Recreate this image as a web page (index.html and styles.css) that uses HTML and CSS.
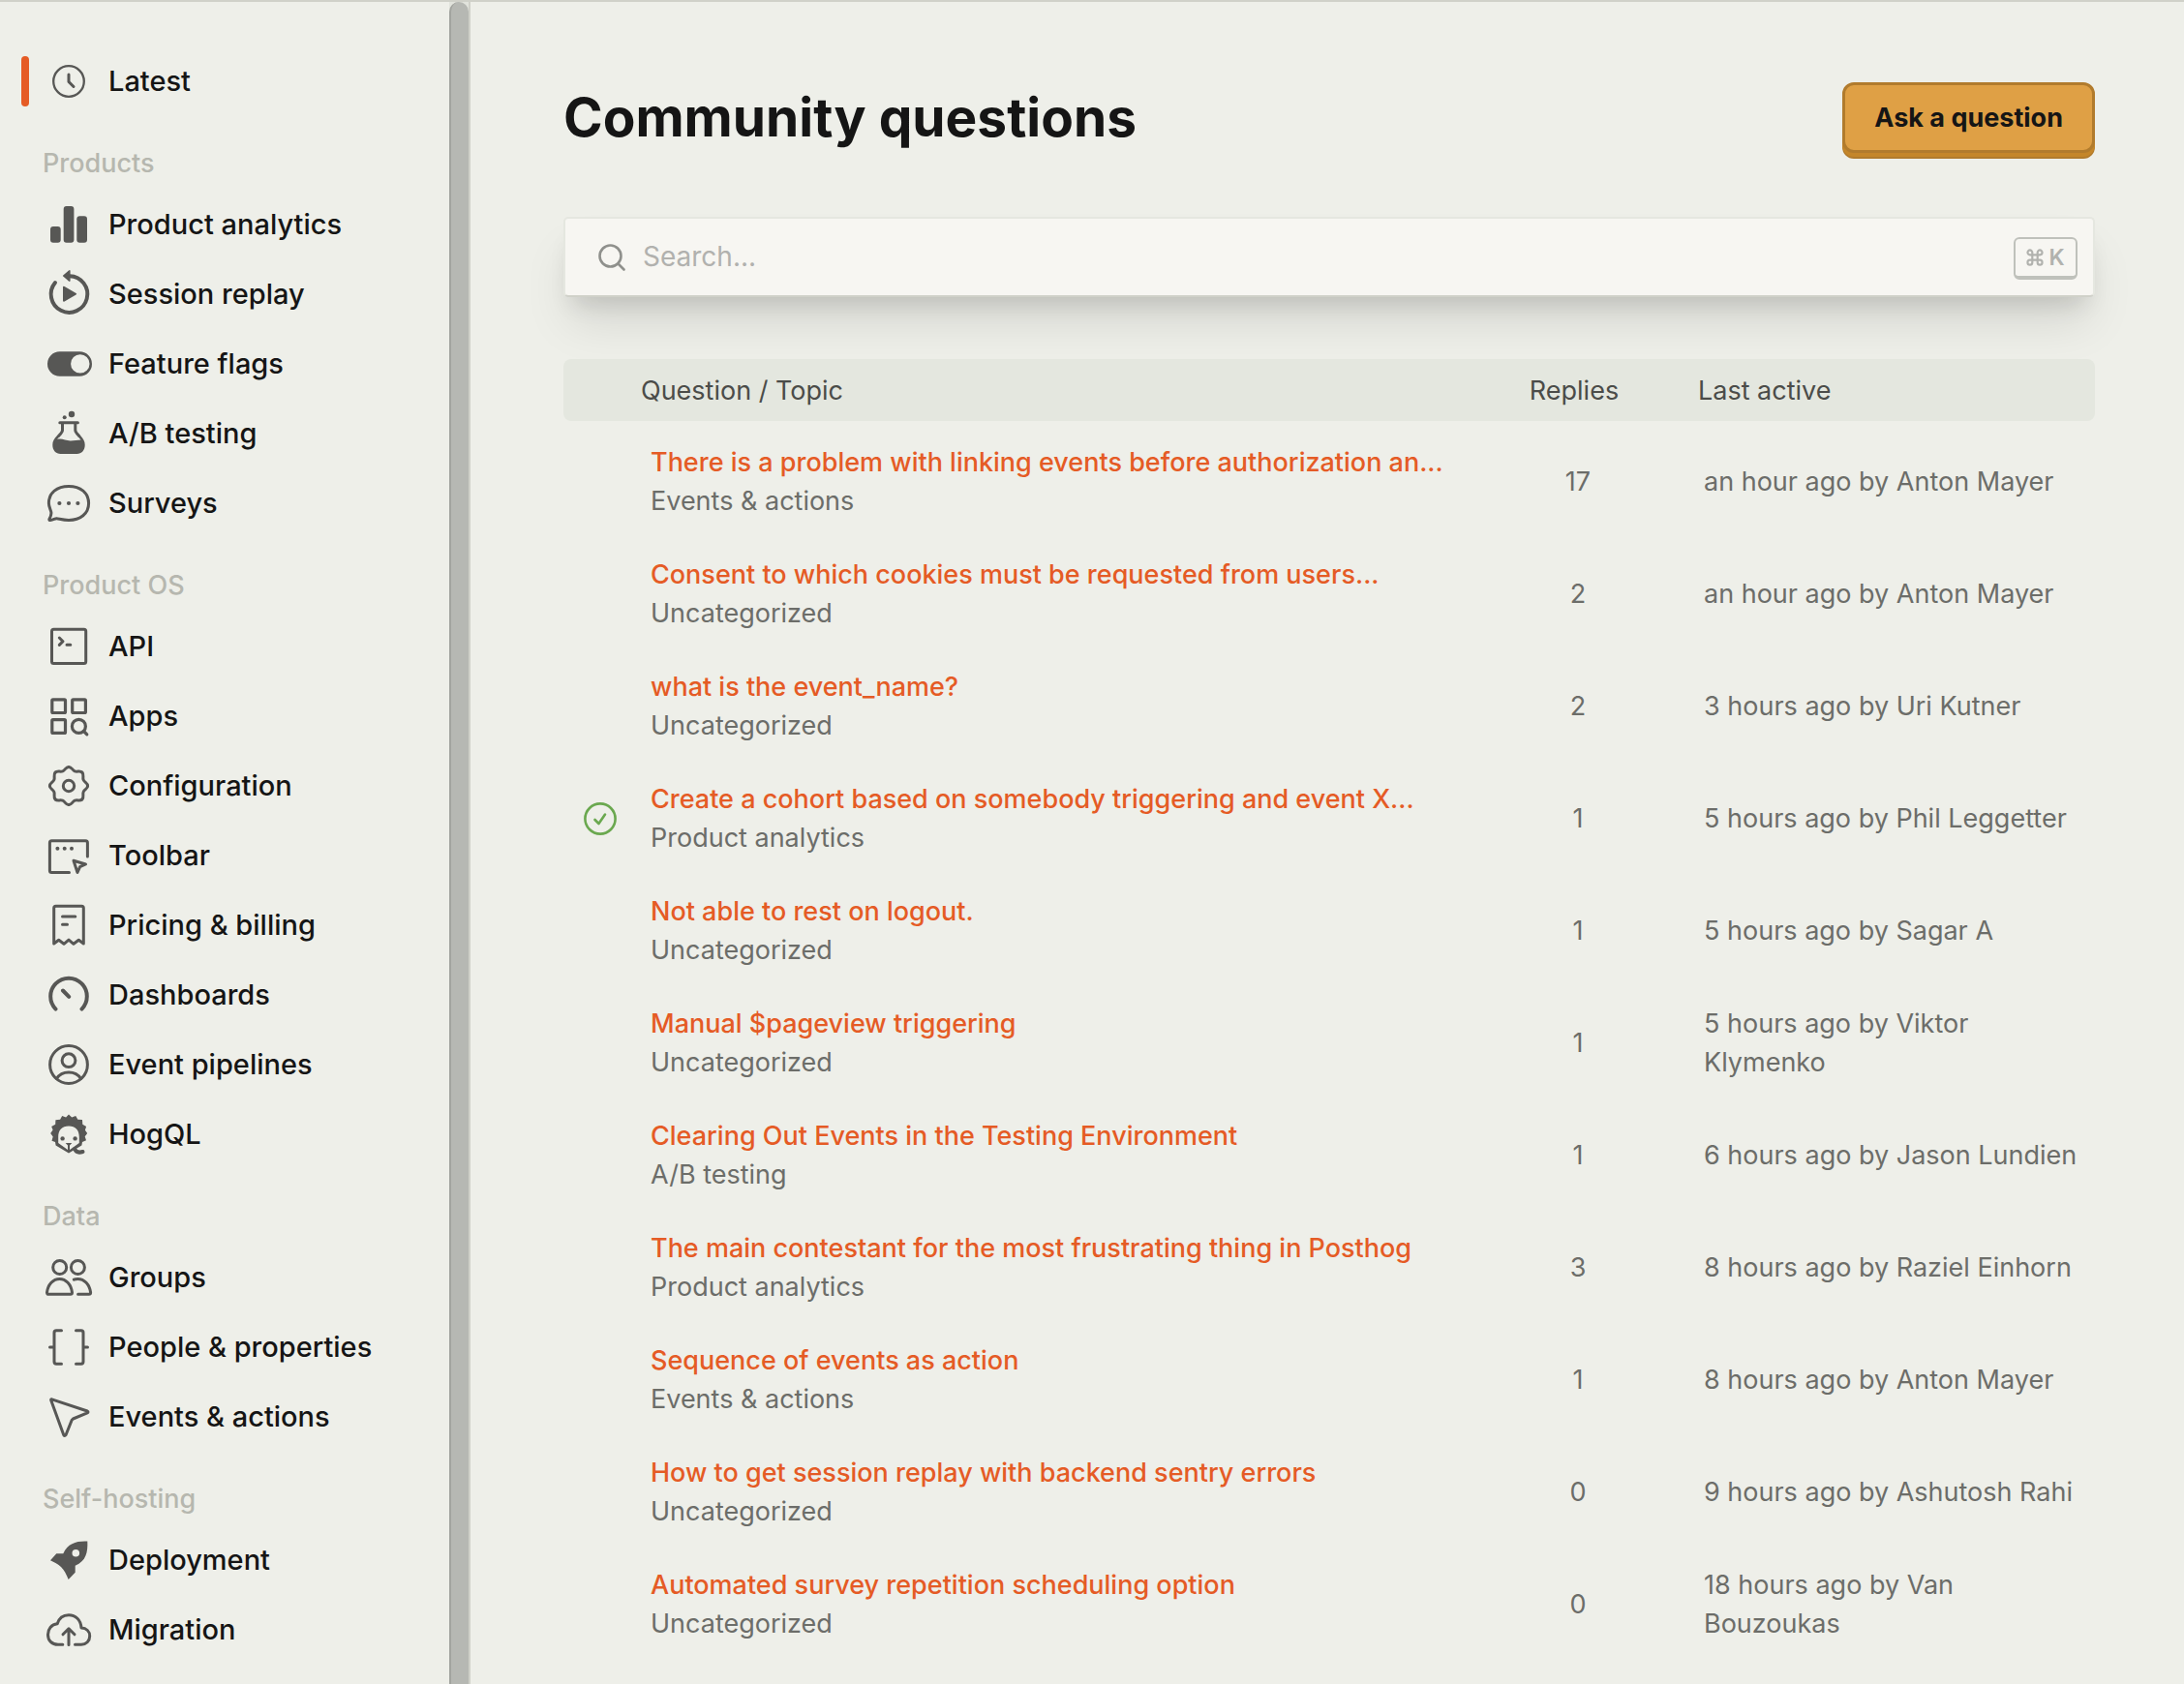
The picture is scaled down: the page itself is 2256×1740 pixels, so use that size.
FILE: index.html
```html
<!DOCTYPE html>
<html lang="en">
<head>
<meta charset="utf-8">
<meta name="viewport" content="width=device-width, initial-scale=1">
<title>Community questions</title>
<link rel="stylesheet" href="styles.css">
</head>
<body>
<div class="layout">
  <nav class="sidebar" aria-label="Topics">
    <div class="menu">
      <ul class="menu-list">
        <li><a class="item active" href="#"><svg class="icon" viewBox="0 0 48 48"><circle cx="24" cy="24" r="15.800" stroke-width="2.300"/><path d="M24 17v7.500l5 5" stroke-width="3"/></svg>Latest</a></li>
      </ul>
      <h2 class="group">Products</h2>
      <ul class="menu-list">
        <li><a class="item" href="#"><svg class="icon solid" viewBox="0 0 48 48"><rect x="5" y="26" width="10.700" height="16.700" rx="3"/><rect x="18.700" y="5" width="10.700" height="37.700" rx="3"/><rect x="32.300" y="15.300" width="10.700" height="27.400" rx="3"/></svg>Product analytics</a></li>
        <li><a class="item" href="#"><svg class="icon" viewBox="0 0 48 48"><path d="M10 12A18.800 18.800 0 1 0 25 5.200" stroke-width="4"/><path class="fill" d="M18.200 5.600q-.8-.6 0-1.200L24-.6q1.600-1 1.600.8v9.600q0 1.800-1.600.8zM18 16.800q0-1.800 1.600-.8l12 7q1.200.7 0 1.400l-12 7q-1.600.9-1.600-.8z"/></svg>Session replay</a></li>
        <li><a class="item" href="#"><svg class="icon solid" viewBox="0 0 48 48"><path fill-rule="evenodd" d="M14.700 11.300h20.600a12.700 12.700 0 0 1 0 25.400H14.700a12.700 12.700 0 0 1 0-25.400zM35.800 14.200a9.700 9.700 0 1 0 0 19.400 9.700 9.700 0 0 0 0-19.400z"/></svg>Feature flags</a></li>
        <li><a class="item" href="#"><svg class="icon" viewBox="0 0 48 48"><path d="M14.800 12.700h18.600M17.500 13v7.500c0 2-1.500 3.500-4 6M30.800 13v7.500c0 2 1.500 3.500 4 6"/><path class="fill" d="M12.300 25.700 15 26.500 12 30c5-1.500 9 1.700 14 1.500 3.600-.1 7-.6 10.500-1L33 26.500l2.700-.8c3.500 3.400 5 6.300 5 10 0 5.300-3.400 9.300-8.300 9.300H15.600c-4.900 0-8.300-4-8.300-9.300 0-3.700 1.500-6.600 5-10z"/><circle class="fill" cx="27" cy="4" r="3.200"/><circle class="fill" cx="19.700" cy="7.300" r="2"/></svg>A/B testing</a></li>
        <li><a class="item" href="#"><svg class="icon" viewBox="0 0 48 48"><path d="M24 6.400C12 6.400 3.400 13 3.400 24c0 3.500 1.800 6.500 2.400 9 .5 2.500-.3 4.500-1.700 7-.6 1.100 0 1.600 1 1.500 3-.2 4.500-1.900 6.500-1.800 2.200.1 6 1.700 12.400 1.700 12 0 20.600-6.600 20.600-17.400S36 6.400 24 6.400z"/><circle class="fill" cx="14.400" cy="24" r="2.100"/><circle class="fill" cx="24" cy="24" r="2.100"/><circle class="fill" cx="33.400" cy="24" r="2.100"/></svg>Surveys</a></li>
      </ul>
      <h2 class="group">Product OS</h2>
      <ul class="menu-list">
        <li><a class="item" href="#"><svg class="icon" viewBox="0 0 48 48"><rect x="6.500" y="6.300" width="35.200" height="35.200" rx="2"/><path d="m14.300 15 3.700 3.700-3.700 3.700M22 22.300h3.800"/></svg>API</a></li>
        <li><a class="item" href="#"><svg class="icon" viewBox="0 0 48 48"><g stroke-width="3.200"><rect x="6.800" y="6.800" width="13.700" height="13.700" rx="1"/><rect x="27.700" y="6.800" width="13.700" height="13.700" rx="1"/><rect x="6.800" y="27.700" width="13.700" height="13.700" rx="1"/><circle cx="34.400" cy="34.400" r="7"/><path d="m39.500 39.500 3.300 3.300"/></g></svg>Apps</a></li>
        <li><a class="item" href="#"><svg class="icon" viewBox="0 0 48 48"><defs><path id="tooth" d="M24 4.400C27.200 4.400 27.600 7.700 30.280 8.850C32.960 9.960 35.600 7.880 37.860 10.140"/></defs><use href="#tooth"/><use href="#tooth" transform="rotate(45 24 24)"/><use href="#tooth" transform="rotate(90 24 24)"/><use href="#tooth" transform="rotate(135 24 24)"/><use href="#tooth" transform="rotate(180 24 24)"/><use href="#tooth" transform="rotate(225 24 24)"/><use href="#tooth" transform="rotate(270 24 24)"/><use href="#tooth" transform="rotate(315 24 24)"/><circle cx="24" cy="24" r="5.700"/></svg>Configuration</a></li>
        <li><a class="item" href="#"><svg class="icon" viewBox="0 0 48 48"><path d="M24.500 41.400H6.400q-2 0-2-2V10.700q0-2 2-2h35q2 0 2 2V25"/><path d="m29 29.300 12.500 3.700-5.900 2.700-2.600 5.800z"/><circle class="fill" cx="12.400" cy="16.700" r="2"/><circle class="fill" cx="19.700" cy="16.700" r="2"/><circle class="fill" cx="27" cy="16.700" r="2"/></svg>Toolbar</a></li>
        <li><a class="item" href="#"><svg class="icon" viewBox="0 0 48 48"><path d="M8.700 43V6.300q0-2 2-2h26.600q2 0 2 2V43l-5-3.700-5.300 4-5-4.200-5 4.200-5.300-4z"/><path d="M17.500 15h13.300M17.500 23.300h5"/></svg>Pricing &amp; billing</a></li>
        <li><a class="item" href="#"><svg class="icon" viewBox="0 0 48 48"><path d="M10.500 38.600a18.800 18.800 0 1 1 27 0M18 19.500l6.200 6.300" stroke-width="4"/></svg>Dashboards</a></li>
        <li><a class="item" href="#"><svg class="icon" viewBox="0 0 48 48"><circle cx="24" cy="24" r="19.400"/><circle cx="24" cy="19.700" r="6.900"/><path d="M11.500 38.500C14 34.500 18.500 32 24 32s10 2.500 12.500 6.500"/></svg>Event pipelines</a></li>
        <li><a class="item" href="#"><svg class="icon" viewBox="0 0 48 48"><path class="fill" fill-rule="evenodd" d="m24 3.500 3.200 3 4-1.500 2.200 3.700 4.600.3.300 4.800 3.800 2.200-1.200 3.800 2.300 3.300-2.500 3.200 1.300 4-4 1.700-.6 3.500L24 43.500 10.600 35.500 10 32l-3.500-1.200 1.200-4.200L5.200 23l2.400-3.400-1.400-3.700 4-2.200.2-4.500 4.700-.4L17.200 5l3.900 1.400zM24 15.600c-7 0-10.800 4.400-10.800 11V33L24 40.800 34.800 33v-6.400c0-6.600-3.800-11-10.800-11z"/><circle class="fill" cx="17.600" cy="28.400" r="2.200"/><circle class="fill" cx="30.600" cy="28.400" r="2.200"/><path class="fill" d="M20.700 33h6.600L24 36.500z"/><path d="M24 34.500v6" stroke-width="2"/><path d="M30 39c1.500 3.500 4.500 4.300 8.500 3" stroke-width="4"/></svg>HogQL</a></li>
      </ul>
      <h2 class="group">Data</h2>
      <ul class="menu-list">
        <li><a class="item" href="#"><svg class="icon" viewBox="0 0 48 48"><circle cx="14.700" cy="13.500" r="7"/><circle cx="33.400" cy="13.500" r="7"/><path d="M1.500 39.500C2.500 31 8 25.400 14.500 25.400s12 5.600 13 14.100q0 1.800-1.700 1.800H3.200q-1.700 0-1.700-1.800zM29.300 26.200c1.200-.6 2.600-.8 4-.8C40 25.400 45.500 31 46.600 39.500q0 1.800-1.700 1.800H33.600"/></svg>Groups</a></li>
        <li><a class="item" href="#"><svg class="icon" viewBox="0 0 48 48"><path d="M16.500 6.700H11.200q-2.200 0-2.200 2.200v30.200q0 2.200 2.200 2.200h5.300M4.500 24H9M31.500 6.700h5.300q2.200 0 2.200 2.200v30.200q0 2.200-2.200 2.200h-5.300M39 24h4.500"/></svg>People &amp; properties</a></li>
        <li><a class="item" href="#"><svg class="icon" viewBox="0 0 48 48"><path d="M6.500 5.800 43.200 18q1.600.9 0 1.900L28.500 26l-1.300 1.300L21 42.700q-1.200 1.600-2.200 0L5.700 6.800q-.3-1.200.8-1z"/></svg>Events &amp; actions</a></li>
      </ul>
      <h2 class="group">Self-hosting</h2>
      <ul class="menu-list">
        <li><a class="item" href="#"><svg class="icon solid" viewBox="0 0 48 48"><path fill-rule="evenodd" d="M43.300 4.600c.5 11.500-1.300 20.400-12.600 25.100v7l-7 7.300C21.500 38.500 19.500 34.500 16 31c-3-2.700-7-4.800-11-6.700l6.300-7h7C23.300 6.500 32 4.100 43.300 4.600zM31.300 13a3.800 3.800 0 1 0 0 7.600 3.800 3.800 0 0 0 0-7.600z"/></svg>Deployment</a></li>
        <li><a class="item" href="#"><svg class="icon" viewBox="0 0 48 48"><path d="M17.800 39.300H13C6.500 39.300 2.500 35 2.500 29c0-5.700 3.600-10.500 9.700-11.200C14 11.800 18.500 8.700 24 8.700c7 0 12.500 5 13 13.300 5.200.2 8.700 3.700 8.700 8.500 0 5-3.700 8.800-8.700 8.800h-6.500"/><path d="M24 39.500V23.500M18 28.800l6-6 6 6"/></svg>Migration</a></li>
      </ul>
    </div>
    <div class="scrollbar" aria-hidden="true"><div class="thumb"></div></div>
  </nav>

  <main class="content">
    <header class="page-head">
      <h1 class="title">Community questions</h1>
      <button class="ask" type="button">Ask a question</button>
    </header>

    <form class="search" role="search">
      <label class="search-label" for="q" aria-label="Search"><svg class="search-icon" viewBox="0 0 28 28"><circle cx="12.500" cy="12.500" r="11"/><path d="m20.500 20.500 6 6"/></svg></label>
      <input class="search-input" id="q" type="search" placeholder="Search...">
      <kbd class="shortcut"><svg class="cmd" viewBox="0 0 20 20"><path d="M7 7h6v6H7zM7 7H4.300A2.700 2.700 0 1 1 7 4.300zM13 7V4.300A2.700 2.700 0 1 1 15.700 7zM13 13h2.700a2.700 2.700 0 1 1-2.700 2.700zM7 13v2.700A2.700 2.700 0 1 1 4.300 13z"/></svg>K</kbd>
    </form>

    <table class="questions">
      <colgroup><col class="col-status"><col><col class="col-replies"><col class="col-active"></colgroup>
      <thead>
        <tr><th></th><th>Question / Topic</th><th class="num">Replies</th><th class="when">Last active</th></tr>
      </thead>
      <tbody>
        <tr><td></td><td><a class="question" href="#">There is a problem with linking events before authorization an...</a><span class="topic">Events &amp; actions</span></td><td class="num">17</td><td class="when">an hour ago by Anton Mayer</td></tr>
        <tr><td></td><td><a class="question" href="#">Consent to which cookies must be requested from users...</a><span class="topic">Uncategorized</span></td><td class="num">2</td><td class="when">an hour ago by Anton Mayer</td></tr>
        <tr><td></td><td><a class="question" href="#">what is the event_name?</a><span class="topic">Uncategorized</span></td><td class="num">2</td><td class="when">3 hours ago by Uri Kutner</td></tr>
        <tr><td class="status"><svg class="check" viewBox="0 0 36 36" role="img" aria-label="Solved"><circle cx="18" cy="18" r="15.600"/><path d="m12.500 19 4 4 6.500-9.500"/></svg></td><td><a class="question" href="#">Create a cohort based on somebody triggering and event X...</a><span class="topic">Product analytics</span></td><td class="num">1</td><td class="when">5 hours ago by Phil Leggetter</td></tr>
        <tr><td></td><td><a class="question" href="#">Not able to rest on logout.</a><span class="topic">Uncategorized</span></td><td class="num">1</td><td class="when">5 hours ago by Sagar A</td></tr>
        <tr><td></td><td><a class="question" href="#">Manual $pageview triggering</a><span class="topic">Uncategorized</span></td><td class="num">1</td><td class="when">5 hours ago by Viktor Klymenko</td></tr>
        <tr><td></td><td><a class="question" href="#">Clearing Out Events in the Testing Environment</a><span class="topic">A/B testing</span></td><td class="num">1</td><td class="when">6 hours ago by Jason Lundien</td></tr>
        <tr><td></td><td><a class="question" href="#">The main contestant for the most frustrating thing in Posthog</a><span class="topic">Product analytics</span></td><td class="num">3</td><td class="when">8 hours ago by Raziel Einhorn</td></tr>
        <tr><td></td><td><a class="question" href="#">Sequence of events as action</a><span class="topic">Events &amp; actions</span></td><td class="num">1</td><td class="when">8 hours ago by Anton Mayer</td></tr>
        <tr><td></td><td><a class="question" href="#">How to get session replay with backend sentry errors</a><span class="topic">Uncategorized</span></td><td class="num">0</td><td class="when">9 hours ago by Ashutosh Rahi</td></tr>
        <tr><td></td><td><a class="question" href="#">Automated survey repetition scheduling option</a><span class="topic">Uncategorized</span></td><td class="num">0</td><td class="when">18 hours ago by Van Bouzoukas</td></tr>
      </tbody>
    </table>
  </main>
</div>
</body>
</html>
```
FILE: styles.css
```css
* { box-sizing: border-box; }

body {
  margin: 0;
  background: #eeefe9;
  color: #151515;
  font: 400 28px/40px Inter, "Liberation Sans", sans-serif;
}

a { color: inherit; text-decoration: none; }

.layout {
  display: flex;
  min-height: 100vh;
  border-top: 2px solid #d0d1c9;
}

/* Sidebar */
.sidebar {
  display: flex;
  flex: none;
  width: 486px;
  border-right: 2px solid #d0d1c9;
}

.menu { flex: 1; padding: 46px 0 0 22px; }

.menu-list { margin: 0; padding: 0; list-style: none; }

.item {
  position: relative;
  display: flex;
  align-items: center;
  gap: 17px;
  height: 72px;
  padding-left: 25px;
  font-size: 29px;
  font-weight: 500;
  white-space: nowrap;
}

.item.active::before {
  content: "";
  position: absolute;
  left: 0;
  top: 10px;
  width: 8px;
  height: 52px;
  border-radius: 4px;
  background: #e55b25;
}

.group {
  margin: 0;
  padding: 29px 22px 7px;
  color: #b6b7af;
  font-size: 27px;
  font-weight: 500;
  line-height: 40px;
}

.icon {
  flex: none;
  width: 48px;
  height: 48px;
  overflow: visible;
  fill: none;
  stroke: #575755;
  stroke-width: 3;
  stroke-linecap: round;
  stroke-linejoin: round;
}

.icon.solid, .icon .fill { fill: #575755; stroke: none; }

.scrollbar { width: 20px; background: #e1e3dc; }

.thumb {
  height: 100%;
  border-left: 2px solid #a2a49f;
  border-radius: 10px 10px 0 0;
  background: #b6b8b3;
}

/* Main column */
.content { flex: 1; min-width: 0; padding: 83px 92px 0 96px; }

.page-head {
  display: flex;
  align-items: flex-start;
  justify-content: space-between;
  margin-bottom: 60px;
}

.title { margin: 0; font-size: 55px; font-weight: 700; line-height: 72px; }

.ask {
  height: 73px;
  margin-bottom: 6px;
  padding: 0 30px;
  border: 3px solid #b17b2d;
  border-radius: 12px;
  background: #dfa045;
  box-shadow: 0 4px 0 #c4862a, 0 6px 0 #b17b2d;
  color: #151515;
  font: 700 27px/40px Inter, "Liberation Sans", sans-serif;
}

.search {
  display: flex;
  align-items: center;
  height: 83px;
  margin-bottom: 64px;
  padding: 0 16px 0 34px;
  border: 2px solid #e5e7e0;
  border-bottom-color: #d0d1c9;
  border-radius: 5px;
  background: #f7f6f2;
  box-shadow: 0 32px 48px -6px rgba(0, 0, 0, .1), 0 16px 24px -10px rgba(0, 0, 0, .13);
}

.search-label { display: flex; }

.search-icon {
  width: 28px;
  height: 28px;
  fill: none;
  stroke: #8f908c;
  stroke-width: 2.600;
  stroke-linecap: round;
}

.search-input {
  flex: 1;
  min-width: 0;
  height: 60px;
  padding: 0 18px 2px;
  border: 0;
  outline: 0;
  background: transparent;
  color: #151515;
  font: inherit;
}

.search-input::placeholder { color: #b1b1ae; }

.shortcut {
  display: flex;
  align-items: center;
  justify-content: center;
  gap: 5px;
  width: 66px;
  height: 44px;
  margin-top: 2px;
  border: 2px solid #bfc1bb;
  border-bottom-width: 4px;
  border-radius: 6px;
  color: #b1b2ae;
  font: 600 23px/36px Inter, "Liberation Sans", sans-serif;
}

.cmd { width: 18px; height: 18px; overflow: visible; fill: none; stroke: currentColor; stroke-width: 2.400; }

/* Question list */
.questions {
  width: 100%;
  border-spacing: 0;
  table-layout: fixed;
  color: #6c6d69;
  font-size: 27px;
}

.col-status { width: 76px; }
.col-replies { width: 224px; }
.col-active { width: 424px; }

.questions th {
  height: 64px;
  padding: 2px 8px 0 4px;
  background: #e4e7df;
  color: #4b4c49;
  font-weight: 400;
  text-align: left;
}

.questions th:first-child { border-radius: 8px 0 0 8px; }
.questions th:last-child { border-radius: 0 8px 8px 0; }
.questions th.num { text-align: center; }
.questions th.when { padding-left: 14px; }

.questions tbody::before { content: ""; display: block; height: 5px; }

.questions td { height: 116px; padding: 18px 10px 18px 14px; vertical-align: middle; }
.questions td.num { text-align: center; }
.questions td.when { padding-left: 20px; }
.questions td.status { padding: 0; text-align: center; }

.question { display: block; color: #e55b25; font-weight: 500; white-space: nowrap; }
.topic { display: block; }

.check {
  display: block;
  width: 36px;
  height: 36px;
  margin: 0 auto;
  fill: none;
  stroke: #6aa84f;
  stroke-width: 2.600;
  stroke-linecap: round;
  stroke-linejoin: round;
}
```
